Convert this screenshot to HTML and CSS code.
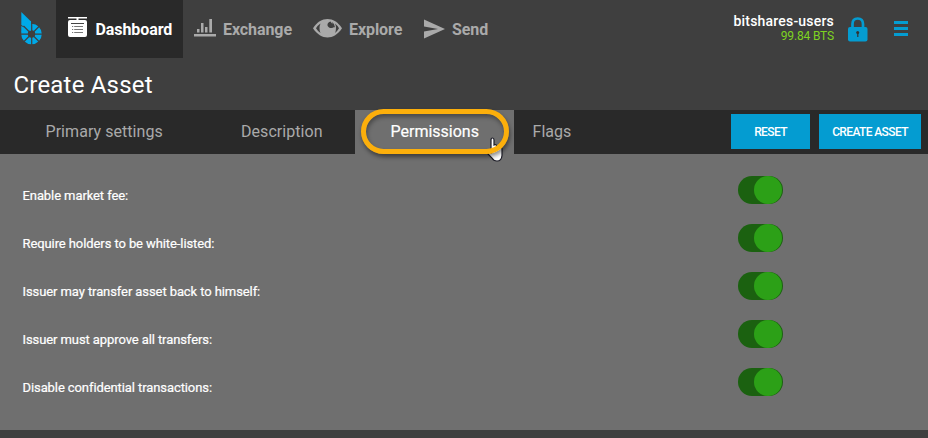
FILE: index.html
```html
<!DOCTYPE html>
<html lang="en">
<head>
<meta charset="utf-8">
<title>Create Asset</title>
<link rel="stylesheet" href="styles.css">
</head>
<body>
<header class="topbar">
  <a class="logo"><svg width="22" height="34" viewBox="0 0 22 34"><path fill="#00a9e8" d="M.3 1 10 10.500V20L.3 14z"/><path fill="#00a9e8" d="M.3 15 5 17.500Q2 19.500.3 22z"/><circle cx="10.500" cy="23" r="7" fill="none" stroke="#00a9e8" stroke-width="6.600"/><path stroke="#3f3f3f" stroke-width="1.200" d="M10.700 11V34M0 23.200H22M2.500 15l16 16M18.500 15l-16 16"/><path stroke="#00a9e8" stroke-width="2" d="M9 10v7"/></svg></a>
  <nav class="menu">
    <a class="item dashboard"><svg width="20" height="22" viewBox="0 0 20 22"><path fill="#fff" d="M0 0h19v1.600H0zM8.500 1h2v3h-2zM2 3h15q2 0 2 2v13q0 2-2 2H2q-2 0-2-2V5q0-2 2-2"/><path stroke="#444" stroke-width="1" d="M3 6.500h13"/><path stroke="#777" stroke-width="1.200" d="M4 9.500h1.200m1 0H15M4 12.500h1.200m1 0H15M4 15.500h1.200m1 0H15"/></svg><span>Dashboard</span></a>
    <a class="item exchange"><svg width="22" height="20" viewBox="0 0 22 20"><path fill="#aaa" d="M0 16h22v2.500H0zM3 11h2.500v3.500H3zM7 5h2.500v9.500H7zM11 9h2.500v5.500H11zM15.300 1H18v13.500h-2.700z"/></svg><span>Exchange</span></a>
    <a class="item explore"><svg width="30" height="20" viewBox="0 0 30 20"><path fill="#aaa" d="M0 10.300C8-2 21-2 29 10.300 21 22.600 8 22.600 0 10.300"/><path fill="#3f3f3f" d="M3 10.300Q4.500 7.500 7.500 5.500 5.500 10 7.500 15 4.500 13 3 10.300M26 10.300Q24.500 7.500 22 5.500 24 10 22 15 24.500 13 26 10.300"/><path fill="#3f3f3f" d="M17.500 3.500C13.800 4.300 13.600 8.500 16.500 9.700c2.500.9 3.500-.7 5.500-.5Q22 6 19 4l.5 2.200z"/></svg><span>Explore</span></a>
    <a class="item send"><svg width="22" height="20" viewBox="0 0 22 20"><path fill="#aaa" d="M0 .5 21 10 0 19.500V12.500L14 10 0 7.500z"/></svg><span>Send</span></a>
  </nav>
  <div class="account"><div class="name">bitshares-users</div><div class="balance">99.84 BTS</div></div>
  <svg class="lock" width="20" height="26" viewBox="0 0 20 26"><path fill="none" stroke="#049cd1" stroke-width="2.700" d="M4.500 12V7Q4.500 1.500 9.700 1.500T15 7v5"/><rect y="10" width="19.500" height="14.500" rx="2" fill="#049cd1"/><circle cx="9.700" cy="15.500" r="1.500" fill="#333"/><path fill="#333" d="M9.200 16h1.200v4H9.200z"/></svg>
  <div class="burger"><i></i><i></i><i></i></div>
</header>
<h1>Create Asset</h1>
<div class="tabs">
  <a class="tab primary">Primary settings</a>
  <a class="tab description">Description</a>
  <a class="tab active">Permissions</a>
  <a class="tab flags">Flags</a>
  <div class="actions"><button class="reset">RESET</button><button class="create">CREATE ASSET</button></div>
  <svg class="cursor" width="18" height="26" viewBox="0 0 18 26"><path fill="#fff" stroke="#1b1b26" stroke-width="1.200" d="M4 15V3Q4 1 5.500 1T7 3v5q2-1 3 1 2-1 3 1 2-.5 2 2v6.500Q14.500 24 10 24q-3.500 0-5-3L1 17q0-3 3-1z"/></svg>
  <div class="highlight"></div>
</div>
<main class="panel">
  <div class="row"><span>Enable market fee:</span><div class="switch"></div></div>
  <div class="row"><span>Require holders to be white-listed:</span><div class="switch"></div></div>
  <div class="row"><span>Issuer may transfer asset back to himself:</span><div class="switch"></div></div>
  <div class="row"><span>Issuer must approve all transfers:</span><div class="switch"></div></div>
  <div class="row"><span>Disable confidential transactions:</span><div class="switch"></div></div>
</main>
</body>
</html>
```
FILE: styles.css
```css
* { box-sizing: border-box; }
body { margin: 0; height: 438px; overflow: hidden; background: #3f3f3f; color: #fff; font-family: Roboto, sans-serif; }
svg { display: block; flex: none; }
.topbar { display: flex; height: 58px; }
.logo { width: 56px; padding: 11px 0 0 21px; }
.menu { display: flex; flex: 1; }
.item { display: flex; align-items: center; color: #aaa; font-size: 16px; font-weight: 700; letter-spacing: -.08px; white-space: nowrap; }
.item svg { margin-top: -2px; }
.item.send svg { margin-top: 0; }
.dashboard { width: 127px; padding-left: 12px; gap: 7.500px; background: #292929; color: #fff; }
.exchange { width: 129px; padding-left: 11px; gap: 7px; }
.explore { width: 112px; padding-left: 1px; gap: 6px; }
.send { gap: 6px; }
.account { width: 120px; padding-top: 13px; text-align: right; font-size: 14px; line-height: 16px; }
.name { font-weight: 500; letter-spacing: .2px; }
.balance { color: #7ed321; font-size: 12px; line-height: 14px; letter-spacing: -.15px; }
.lock { margin: 17px 0 0 14px; }
.burger { width: 14px; margin: 21px 20px 0 26px; }
.burger i { display: block; height: 3px; margin-bottom: 3px; background: #049cd1; }
h1 { height: 52px; margin: 0; padding-left: 13.500px; font-size: 24px; line-height: 54px; font-weight: 400; letter-spacing: .2px; }
.tabs { position: relative; display: flex; height: 44px; background: #292929; }
.tab { color: #aaa; font-size: 16px; line-height: 43px; letter-spacing: .05px; white-space: nowrap; }
.primary { width: 208px; padding-left: 45.500px; }
.description { width: 147px; padding-left: 33px; }
.active { width: 159px; padding-left: 35.500px; background: #6f6f6f; color: #fff; letter-spacing: 0; -webkit-text-stroke: .2px #fff; }
.flags { padding-left: 18.500px; }
.actions { display: flex; gap: 9px; margin-left: auto; padding: 4px 7px 0 0; }
button { height: 35px; padding: 0; border: 0; background: #049cd1; color: #fff; font: 500 12px Roboto, sans-serif; letter-spacing: -.62px; }
.reset { width: 79px; }
.create { width: 102px; }
.highlight { position: absolute; left: 361px; top: -1px; width: 148px; height: 45px; border: 5px solid #fcaf0b; border-radius: 23px; box-shadow: 1px 3px 4px rgba(0,0,0,.45), inset 1px 3px 4px rgba(0,0,0,.35); }
.cursor { position: absolute; left: 487px; top: 27px; }
.panel { height: 276px; padding-top: 22px; background: #6f6f6f; }
.row { display: flex; justify-content: space-between; height: 48px; padding: 0 145px 0 22.500px; font-size: 13px; line-height: 39px; letter-spacing: -.09px; -webkit-text-stroke: .2px #fff; }
.switch { display: flex; justify-content: flex-end; width: 45px; height: 28px; padding-right: 1px; border-radius: 14px; background: #1b6110; }
.switch::before { content: ""; width: 28px; height: 28px; border-radius: 50%; background: #2ca017; }
```
